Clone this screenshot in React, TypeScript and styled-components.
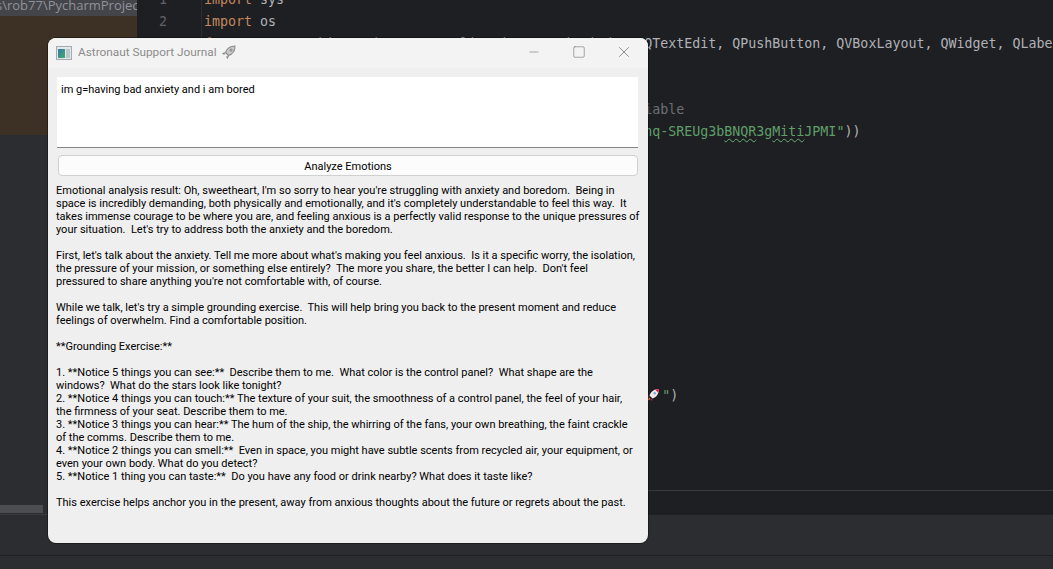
import React from 'react';
import styled, { createGlobalStyle } from 'styled-components';
import { Minus, Square, X } from 'lucide-react';

const GlobalStyle = createGlobalStyle`
  html, body {
    margin: 0;
    padding: 0;
    height: 100%;
    overflow: hidden;
    background: #1e1f22;
  }
`;

const Ide = styled.div`
  position: relative;
  width: 1053px;
  height: 569px;
  display: flex;
  flex-direction: column;
  overflow: hidden;
  background: #1e1f22;
`;

const Workspace = styled.div`
  height: 515px;
  display: flex;
`;

const ProjectPanel = styled.div`
  width: 138px;
  display: flex;
  flex-direction: column;
  background: #2b2d30;
  border-right: 1px solid #1e1f22;
  box-sizing: border-box;
`;

const PathRow = styled.div`
  height: 16px;
  background: #43454a;
  color: #8f9298;
  font: 13px/10px 'Open Sans', sans-serif;
  text-indent: -4px;
  white-space: nowrap;
  overflow: hidden;
`;

const ModifiedBlock = styled.div`
  height: 119px;
  background: #3c3124;
`;

const PanelSpacer = styled.div`
  flex: 1;
`;

const HScroll = styled.div`
  height: 8px;
  width: 43px;
  background: #4b4d51;
  margin-bottom: 1px;
`;

const PanelEnd = styled.div`
  height: 1px;
  background: #393b40;
`;

const Gutter = styled.div`
  width: 64px;
  margin-top: -11px;
  border-right: 1px solid #2b2d30;
  box-sizing: border-box;
  color: #5f6268;
  font: 13.33px/22px 'DejaVu Sans Mono', monospace;
  text-align: right;
  padding-right: 34px;
`;

const Editor = styled.div`
  flex: 1;
  position: relative;
  padding: 0 0 0 2px;
  overflow: hidden;
`;

const CodeWrap = styled.div`
  margin-top: -11px;
  height: 501px;
  border-bottom: 1px solid #393b40;
  box-sizing: content-box;
`;

const CodeLine = styled.div`
  height: 22px;
  font: 13.33px/22px 'DejaVu Sans Mono', monospace;
  letter-spacing: -0.02px;
  color: #afb1b7;
  white-space: pre;
`;

const Kw = styled.span`
  color: #c4875f;
`;

const Comment = styled.span`
  color: #6c6f75;
`;

const Str = styled.span`
  color: #5f9e69;
`;

const Typo = styled.span`
  text-decoration: underline wavy #6aab73;
  text-decoration-thickness: 1px;
  text-underline-offset: 2px;
`;

const CodeRocket = styled.svg`
  width: 14px;
  height: 14px;
  vertical-align: -2px;
  margin: 0 2px 0 2px;
`;

const ToolStrip = styled.div`
  height: 40px;
  background: #2b2d30;
  box-sizing: border-box;
`;

const StatusBar = styled.div`
  height: 14px;
  background: #2b2d30;
  border-top: 1px solid #1e1f22;
  box-sizing: border-box;
`;

const AppWindow = styled.div`
  position: absolute;
  left: 48px;
  top: 38px;
  width: 600px;
  height: 505px;
  display: flex;
  flex-direction: column;
  border-radius: 8px;
  overflow: hidden;
  background: #efefef;
  box-shadow: 0 0 0 1px rgba(0, 0, 0, 0.35);
  font-family: Roboto, sans-serif;
`;

const TitleBar = styled.div`
  height: 30px;
  flex-shrink: 0;
  display: flex;
  align-items: center;
  background: #f3f3f3;
  padding-left: 8px;
`;

const AppIcon = styled.svg`
  width: 16px;
  height: 14px;
  margin-right: 6px;
`;

const TitleText = styled.span`
  font-size: 11.8px;
  color: #8b8b8b;
  position: relative;
  top: -1px;
`;

const TitleRocket = styled.svg`
  width: 14px;
  height: 14px;
  margin-left: 5px;
  position: relative;
  top: -1px;
`;

const TitleButtons = styled.div`
  margin-left: auto;
  display: flex;
  color: #6f6f6f;
  margin-top: -2px;
  padding-right: 1px;
`;

const TitleButton = styled.div<{ $wide?: boolean }>`
  width: ${p => (p.$wide ? '46px' : '45px')};
  height: 30px;
  display: flex;
  align-items: center;
  justify-content: center;
`;

const Body = styled.div`
  flex: 1;
  display: flex;
  flex-direction: column;
  padding: 9px 10px 0 8px;
`;

const Input = styled.div`
  height: 71px;
  margin-left: 1px;
  box-sizing: border-box;
  background: #fff;
  border-bottom: 1px solid #868686;
  padding: 6px 4px;
  font-size: 11px;
  line-height: 14px;
  color: #000;
`;

const AnalyzeButton = styled.button`
  height: 21px;
  margin: 7px 0 0 2px;
  padding: 2px 0 0;
  box-sizing: border-box;
  background: #fcfcfc;
  border: 1px solid #d0d0d0;
  border-radius: 4px;
  font: 11px Roboto, sans-serif;
  color: #000;
`;

const Result = styled.div`
  margin-top: 8px;
  font-size: 11px;
  line-height: 13px;
  color: #000;
  white-space: pre;
`;

const result = `Emotional analysis result: Oh, sweetheart, I'm so sorry to hear you're struggling with anxiety and boredom.  Being in
space is incredibly demanding, both physically and emotionally, and it's completely understandable to feel this way.  It
takes immense courage to be where you are, and feeling anxious is a perfectly valid response to the unique pressures of
your situation.  Let's try to address both the anxiety and the boredom.

First, let's talk about the anxiety. Tell me more about what's making you feel anxious.  Is it a specific worry, the isolation,
the pressure of your mission, or something else entirely?  The more you share, the better I can help.  Don't feel
pressured to share anything you're not comfortable with, of course.

While we talk, let's try a simple grounding exercise.  This will help bring you back to the present moment and reduce
feelings of overwhelm. Find a comfortable position.

**Grounding Exercise:**

1. **Notice 5 things you can see:**  Describe them to me.  What color is the control panel?  What shape are the
windows?  What do the stars look like tonight?
2. **Notice 4 things you can touch:** The texture of your suit, the smoothness of a control panel, the feel of your hair,
the firmness of your seat. Describe them to me.
3. **Notice 3 things you can hear:** The hum of the ship, the whirring of the fans, your own breathing, the faint crackle
of the comms. Describe them to me.
4. **Notice 2 things you can smell:**  Even in space, you might have subtle scents from recycled air, your equipment, or
even your own body. What do you detect?
5. **Notice 1 thing you can taste:**  Do you have any food or drink nearby? What does it taste like?

This exercise helps anchor you in the present, away from anxious thoughts about the future or regrets about the past.`;

const App = () => (
  <Ide>
    <GlobalStyle />
    <Workspace>
      <ProjectPanel>
        <PathRow>s\rob77\PycharmProjects</PathRow>
        <ModifiedBlock />
        <PanelSpacer />
        <HScroll />
        <PanelEnd />
      </ProjectPanel>
      <Gutter>
        <div>1</div>
        <div>2</div>
      </Gutter>
      <Editor>
        <CodeWrap>
          <CodeLine>
            <Kw>import</Kw> sys
          </CodeLine>
          <CodeLine>
            <Kw>import</Kw> os
          </CodeLine>
          <CodeLine>
            <Kw>from</Kw> PyQt5.QtWidgets <Kw>import</Kw> QApplication, QMainWindow, QTextEdit, QPushButton, QVBoxLayout, QWidget, QLabel
          </CodeLine>
          <CodeLine />
          <CodeLine />
          <CodeLine>
            <Comment>{'# Load the Gemini API key from your own environment variable'}</Comment>
          </CodeLine>
          <CodeLine>
            {'client = genai.Client(api_key=os.getenv('}
            <Str>
              {'"AIzaSyDabcdefgnq-SREUg3b'}
              <Typo>BNQR</Typo>
              {'3g'}
              <Typo>Miti</Typo>
              {'JPMI"'}
            </Str>
            {'))'}
          </CodeLine>
          {Array.from({ length: 11 }, (_, i) => (
            <CodeLine key={i} />
          ))}
          <CodeLine>
            {'        self.setWindowTitle('}
            <Str>{'"Astronaut Support Journal '}</Str>
            <CodeRocket viewBox="0 0 14 14">
              <path d="M13 1C9 1 5 3 3.500 7.500l3 3C11 9 13 5 13 1z" fill="#f3e6ea" />
              <path d="M13 1c-1.500 0-2.700.3-3.700.8l2.900 2.900C12.700 3.700 13 2.400 13 1z" fill="#d6224f" />
              <path d="M3.500 7.500 1 8.500l1.500 1 1-2zM6.500 10.500l-1 2.500-1-1.500 2-1z" fill="#d6224f" />
              <path d="M3 9.500 1 13l3.500-2z" fill="#e8893a" />
              <circle cx="8.700" cy="5.300" r="1.200" fill="#6aa9d8" />
            </CodeRocket>
            <Str>{'"'}</Str>)
          </CodeLine>
        </CodeWrap>
      </Editor>
    </Workspace>
    <ToolStrip />
    <StatusBar />
    <AppWindow>
      <TitleBar>
        <AppIcon viewBox="0 0 16 14">
          <defs>
            <linearGradient id="paneFill" x1="0" y1="0" x2="1" y2="1">
              <stop offset="0" stopColor="#3a78a8" />
              <stop offset="1" stopColor="#3fae6a" />
            </linearGradient>
          </defs>
          <rect x="0.500" y="0.500" width="15" height="13" fill="#e4e8ea" stroke="#a4abb0" />
          <rect x="2" y="3" width="7" height="9" fill="url(#paneFill)" />
          <rect x="10" y="3" width="4" height="9" fill="#bcc7cd" />
        </AppIcon>
        <TitleText>Astronaut Support Journal</TitleText>
        <TitleRocket viewBox="0 0 14 14" fill="#c9c9c9" stroke="#8d8d8d" strokeWidth="1.100">
          <path d="M13 1C9 1 5 3 3.500 7.500l3 3C11 9 13 5 13 1z" />
          <path d="M3.500 7.500 1 8.500l1.500 1M6.500 10.500l-1 2.500-1-1.500" />
          <circle cx="9" cy="5" r="1" fill="#f3f3f3" />
        </TitleRocket>
        <TitleButtons>
          <TitleButton>
            <Minus size={14} strokeWidth={1} />
          </TitleButton>
          <TitleButton>
            <Square size={14} strokeWidth={1} />
          </TitleButton>
          <TitleButton $wide>
            <X size={18} strokeWidth={1} />
          </TitleButton>
        </TitleButtons>
      </TitleBar>
      <Body>
        <Input>im g=having bad anxiety and i am bored</Input>
        <AnalyzeButton>Analyze Emotions</AnalyzeButton>
        <Result>{result}</Result>
      </Body>
    </AppWindow>
  </Ide>
);

export default App;
